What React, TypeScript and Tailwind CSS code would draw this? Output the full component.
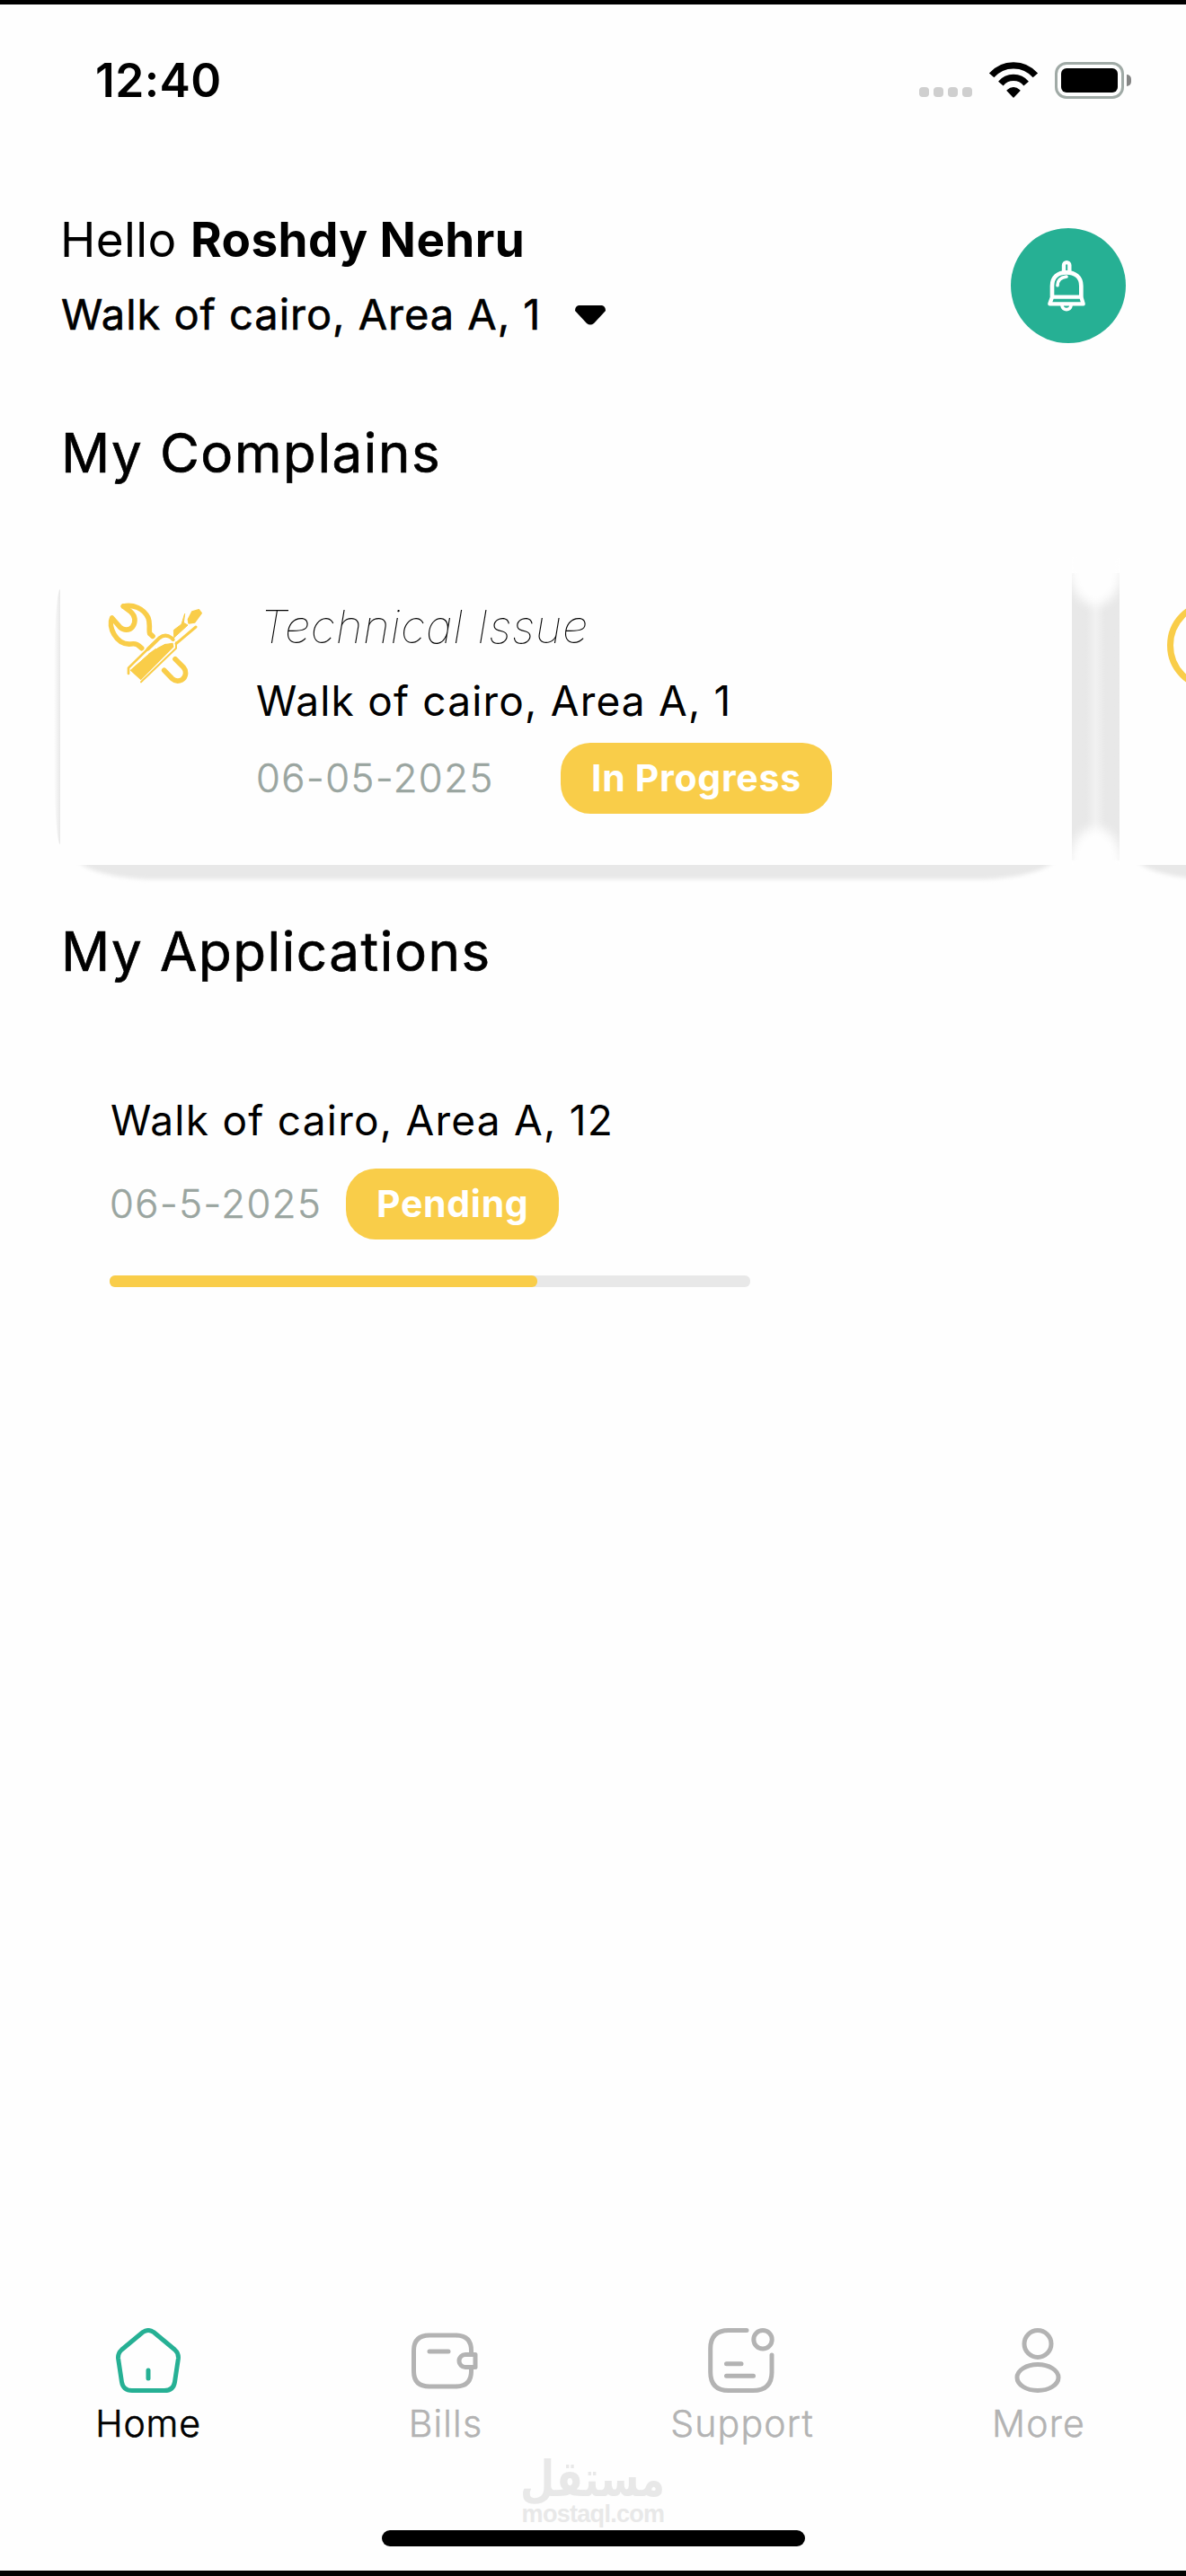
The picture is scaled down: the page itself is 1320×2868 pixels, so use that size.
import type { ReactNode } from "react";

function WifiIcon() {
  return (
    <svg className="h-[42px] w-[56px]" viewBox="12 20 170 127" fill="none" stroke="#000" strokeWidth="22">
      <path d="M23 68A98 98 0 0 1 171 68" />
      <path d="M54 96A56 56 0 0 1 140 96" />
      <path d="M76 119Q97 100 118 119L97 141Z" fill="#000" strokeWidth="4" strokeLinejoin="round" />
    </svg>
  );
}

function StatusBar() {
  return (
    <div className="flex h-[168px] items-center justify-between pr-[61px] pl-[106px]">
      <span className="text-[51.5px] leading-[60px] font-semibold tracking-[0.4px]">12:40</span>
      <div className="flex items-center">
        <div className="mt-[27px] mr-[18px] flex gap-[5px]">
          {[0, 1, 2, 3].map((i) => (
            <span key={i} className="size-[11px] rounded-[4px] bg-[#cfcfcf]" />
          ))}
        </div>
        <WifiIcon />
        <div className="ml-[18px] h-[41px] w-[77px] rounded-[13px] border-[3px] border-[#a0aaa6] p-[4px]">
          <div className="h-full rounded-[6px] bg-black" />
        </div>
        <div className="ml-[3px] h-[13px] w-[5px] rounded-r-full bg-[#858585]" />
      </div>
    </div>
  );
}

function BellIcon() {
  return (
    <svg className="h-[75px] w-[70px]" viewBox="0 0 210 225" fill="none" stroke="#fff" strokeWidth="14" strokeLinecap="round" strokeLinejoin="round">
      <path d="M90 62V43a9.500 9.500 0 0 1 19 0V62" strokeWidth="13" />
      <path d="M51 146V112C51 82 71 67 99 67S148 82 148 112V146" />
      <path d="M51 149H148L155 172H43Z" strokeWidth="13" />
      <path d="M84 178C86 195 112 195 114 178" strokeWidth="11" />
      <path d="M69 110C69 94 79 84 99 81" strokeWidth="11" />
    </svg>
  );
}

function ToolsIcon() {
  return (
    <svg className="mt-[4px] h-[90px] w-[106px] shrink-0" viewBox="180 91 318 270" fill="none" stroke="#f9cd49" strokeWidth="17" strokeLinecap="round" strokeLinejoin="round">
      <path d="M232 103C264 97 299 108 315 142C323 162 316 182 320 194L330 203" />
      <path d="M232 103L257 122C272 135 274 155 263 171C251 186 232 183 221 173L194 142C187 156 190 178 201 197C215 220 236 231 257 229C275 226 281 232 293 243" />
      <path d="M405 279L432 306C444 320 441 340 428 348C415 355 402 351 394 344L368 317" />
      <path d="M257 317L290 347L398 238L396 227L372 231L318 262L340 246Z" fill="#f9cd49" strokeWidth="4" />
      <path d="M258 316L318 262L312 284L346 243L372 230" fill="#f9cd49" strokeWidth="3" />
      <path d="M249 328V309L352 208" strokeWidth="8" />
      <path d="M314 246L352 209Q372 193 392 208L398 214" strokeWidth="12" />
      <path d="M291 356L408 243V224" strokeWidth="6" />
      <path d="M408 228L474 172" strokeWidth="9" />
      <path d="M401 182L426 163L437 128L433 158L447 166L402 207Z" fill="#f9cd49" strokeWidth="3" />
      <path d="M448 147L461 121L484 114L493 126L470 157L450 160Z" fill="#f9cd49" strokeWidth="4" />
    </svg>
  );
}

function Badge({ children }: { children: ReactNode }) {
  return (
    <span className="flex h-[79px] items-center rounded-[33px] bg-[#f9cd49] px-[34px] pt-px text-[41px] font-bold tracking-[0.7px] text-white">
      {children}
    </span>
  );
}

function ComplaintCard({ icon, children }: { icon: ReactNode; children?: ReactNode }) {
  return (
    <div className="relative isolate h-[343px] w-[1126px] shrink-0">
      <div className="absolute right-[16px] bottom-[-16px] left-[16px] -z-10 h-[60px] rounded-b-[90px_28px] bg-[#e8e8e8] blur-[2px]" />
      <div className="flex h-full bg-[#fefefe] pt-[47px] pl-[53px]">
        {icon}
        {children}
      </div>
    </div>
  );
}

function CardGap() {
  return (
    <div className="relative h-[343px] w-[53px] shrink-0 overflow-hidden">
      <div className="mt-[18px] h-[320px] bg-linear-to-r from-[#e8e8e8] from-30% via-[#f1f1f1] to-[#e8e8e8] to-70%" />
      <div className="absolute -top-[30px] -left-[3px] h-[84px] w-[59px] rounded-[50%] bg-[#fefefe] blur-[6px]" />
      <div className="absolute -bottom-[42px] -left-[3px] h-[84px] w-[59px] rounded-[50%] bg-[#fefefe] blur-[6px]" />
    </div>
  );
}

function NavItem({ label, active, children }: { label: string; active?: boolean; children: ReactNode }) {
  return (
    <div className={active ? "flex flex-col items-center text-[#26b094]" : "flex flex-col items-center text-[#b3b3b3]"}>
      <svg className="h-[72px] w-[74px]" viewBox="0 0 74 72" fill="none" stroke="currentColor" strokeWidth="5" strokeLinecap="round" strokeLinejoin="round">
        {children}
      </svg>
      <span
        className={
          active
            ? "mt-[9px] text-[41px] leading-[50px] font-light tracking-[0.8px] text-black [-webkit-text-stroke:0.6px]"
            : "mt-[9px] pl-[2px] text-[41px] leading-[50px] font-light tracking-[1.2px] [-webkit-text-stroke:0.5px]"
        }
      >
        {label}
      </span>
    </div>
  );
}

function SectionTitle({ children }: { children: ReactNode }) {
  return <h2 className="pl-[68px] text-[60px] leading-[80px] tracking-[1.6px] [-webkit-text-stroke:0.7px]">{children}</h2>;
}

export default function App() {
  return (
    <div className="flex h-[2868px] w-[1320px] flex-col overflow-hidden border-t-[5px] border-b-[6px] border-black bg-[#fefefe] font-['Inter',sans-serif] text-black">
      <StatusBar />

      <header className="mt-[58px] flex items-start justify-between pr-[67px] pl-[67px]">
        <div>
          <h1 className="pt-px text-[53px] leading-[70px] tracking-[0.4px]">
            Hello <span className="font-bold">Roshdy Nehru</span>
          </h1>
          <div className="mt-[13px] flex items-center pl-[1px] text-[47px] leading-[70px] tracking-[0.95px] [-webkit-text-stroke:0.6px]">
            Walk of cairo, Area A, 1
            <svg className="mt-[1px] ml-[38px] h-[22px] w-[34px]" viewBox="0 0 34 22">
              <path d="M4 0H30Q34 1 34 6L21 20Q17 23 13 20L0 6Q0 1 4 0Z" stroke="none" />
            </svg>
          </div>
        </div>
        <button className="mt-[23px] flex size-[128px] items-center justify-center rounded-full bg-[#26b094]">
          <BellIcon />
        </button>
      </header>

      <div className="mt-[79px]">
        <SectionTitle>My Complains</SectionTitle>
      </div>

      <div className="mt-[76px] flex">
        <div className="mt-[36px] ml-[60px] h-[284px] w-[7px] shrink-0 rounded-l-[7px_110px] bg-linear-to-r from-[#fefefe] to-[#e8e8e8]" />
        <ComplaintCard icon={<ToolsIcon />}>
          <div className="ml-[59px] flex flex-col">
            <span className="mt-px ml-[4px] text-[51px] leading-[60px] font-thin tracking-[0.6px] italic">Technical Issue</span>
            <span className="mt-[22px] text-[46px] leading-[60px] tracking-[1.2px]">Walk of cairo, Area A, 1</span>
            <div className="mt-[17px] flex items-center">
              <span className="w-[339px] text-[43.5px] font-light tracking-[1.5px] text-[#9aa5a0] [-webkit-text-stroke:0.5px]">06-05-2025</span>
              <Badge>In Progress</Badge>
            </div>
          </div>
        </ComplaintCard>
        <CardGap />
        <ComplaintCard
          icon={
            <svg className="mt-[1px] size-[101px]" viewBox="0 0 101 101" fill="none" stroke="#f9cd49" strokeWidth="7">
              <circle cx="50.5" cy="50.5" r="47" />
            </svg>
          }
        />
      </div>

      <div className="mt-[56px]">
        <SectionTitle>My Applications</SectionTitle>
      </div>

      <section className="mt-[118px] flex flex-col pl-[122px]">
        <span className="pl-px text-[46px] leading-[60px] tracking-[1.25px]">Walk of cairo, Area A, 12</span>
        <div className="mt-[24px] flex items-center">
          <span className="w-[263px] text-[43.5px] font-light tracking-[1.5px] text-[#9aa5a0] [-webkit-text-stroke:0.5px]">06-5-2025</span>
          <Badge>Pending</Badge>
        </div>
        <div className="mt-[40px] h-[13px] w-[713px] rounded-[6px] bg-[#e8e8e8]">
          <div className="h-full w-[476px] rounded-[6px] bg-[#f9cd49]" />
        </div>
      </section>

      <nav className="mt-auto grid grid-cols-4">
        <NavItem label="Home" active>
          <path d="M31 4.5L7.5 24Q3 28 3.6 34L7.5 60Q9 69.5 19 69.5H55Q65 69.5 66.5 60L70.4 34Q71 28 66.5 24L43 4.5Q37 .5 31 4.5Z" />
          <path d="M37 47V56" />
        </NavItem>
        <NavItem label="Bills">
          <path d="M66.5 29V25Q66.5 8 49 8H20Q2.5 8 2.5 25V48Q2.5 65 20 65H49Q66.5 65 66.5 48V44" />
          <path d="M71 29.5V43.5H60A7 7 0 0 1 60 29.5Z" />
          <path d="M20 26H41" />
        </NavItem>
        <NavItem label="Support">
          <path d="M43 2.5H23Q2.7 2.5 2.7 23V49Q2.7 69.5 23 69.5H50Q71 69.5 71 49V30" />
          <circle cx="61" cy="12.8" r="10.2" />
          <path d="M20.5 39.7H37M20.5 53.3H50.5" />
        </NavItem>
        <NavItem label="More">
          <circle cx="37" cy="17.5" r="15" />
          <ellipse cx="37" cy="55" rx="23" ry="14.5" />
        </NavItem>
      </nav>

      <div className="flex h-[94px] flex-col items-center text-[#e8e8e8]">
        <span dir="rtl" lang="ar" className="mt-[10px] inline-block scale-x-[0.8] font-['DejaVu_Sans'] text-[55px] leading-[54px] font-bold">
          مستقل
        </span>
        <span className="-mt-px font-['Liberation_Sans'] text-[27px] leading-[26px] font-bold tracking-[-0.7px]">mostaql.com</span>
      </div>
      <div className="mb-[27px] h-[18px] w-[471px] shrink-0 self-center rounded-full bg-black" />
    </div>
  );
}
